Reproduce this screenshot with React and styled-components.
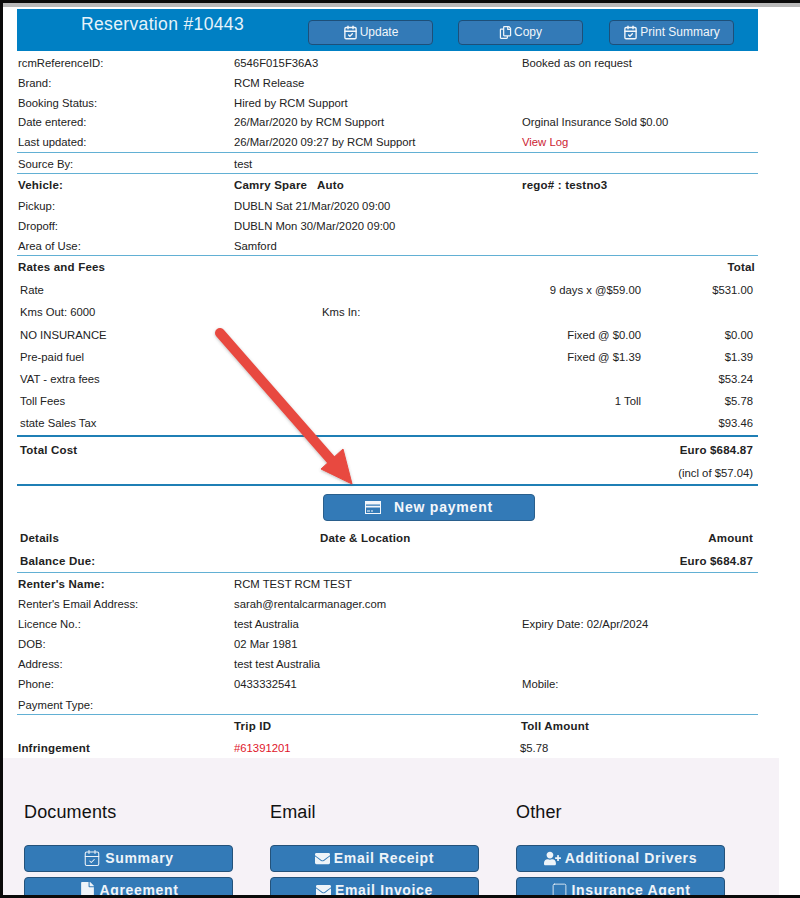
import React from 'react';
import styled, { createGlobalStyle } from 'styled-components';
import { FaRegCopy, FaEnvelope, FaFile, FaUserPlus } from 'react-icons/fa';
import { CalendarCheck, Square } from 'lucide-react';

const GlobalStyle = createGlobalStyle`
  html, body { margin: 0; padding: 0; background: #fff; }
  * { box-sizing: border-box; }
`;

const Frame = styled.div`
  position: relative;
  width: 800px;
  height: 898px;
  overflow: hidden;
  background: #fff;
  border-top: 3px solid #0a0a0a;
  border-left: 3px solid #0a0a0a;
  border-bottom: 3px solid #0a0a0a;
  font-family: 'Liberation Sans', Arial, sans-serif;
  font-size: 11.3px;
  color: #222;
`;

const TopStrip = styled.div`
  height: 4px;
  margin-bottom: 2px;
  background: #b9b9b9;
`;

// everything down to the grey panel
const Sheet = styled.div`
  width: 741px;
  margin-left: 14px;
`;

const Header = styled.div`
  display: grid;
  grid-template-columns: 291px 150px 151px 125px;
  height: 42px;
  background: #0080c4;
  padding-top: 11px;
`;

const Title = styled.h1`
  margin: -6px 0 0;
  text-align: center;
  font-size: 17.5px;
  line-height: 20px;
  font-weight: 400;
  letter-spacing: 0.35px;
  color: #e6f3fa;
`;

const HeaderButton = styled.button`
  width: 125px;
  height: 25px;
  display: flex;
  align-items: center;
  justify-content: center;
  gap: 2px;
  padding: 0 0 1px;
  background: #337ab7;
  border: 1px solid #1d4f79;
  border-radius: 4px;
  color: #f1f6fa;
  font: 12px 'Liberation Sans', Arial, sans-serif;
`;

const Section = styled.div`
  padding-top: ${(p) => p.$pad || 0}px;
  border-bottom: ${(p) => (p.$line === 'strong' ? '2px solid #1f7fb5' : '1px solid #62b0d4')};
`;

const InfoRow = styled.div`
  display: grid;
  grid-template-columns: 216px 288px 1fr;
  height: ${(p) => p.$h || 20.2}px;
  line-height: ${(p) => (p.$h || 20.2) + (p.$shift || 0) * 2}px;
  padding-left: 1px;
`;

const FeeRow = styled.div`
  display: grid;
  grid-template-columns: 302px 140px 179px 112px;
  height: ${(p) => p.$h || 22.2}px;
  line-height: ${(p) => (p.$h || 22.2) + (p.$shift ?? 0.5) * 2}px;
  padding-left: 3px;
`;

const Bold = styled.span`
  font-size: 11.5px;
  font-weight: 700;
  letter-spacing: 0.2px;
`;

const BoldRight = styled(Bold)`
  text-align: right;
`;

const Right = styled.span`
  text-align: right;
`;

const RedText = styled.span`
  color: ${(p) => (p.$bright ? '#e0152a' : '#cc2433')};
`;

const MidHead = styled(Bold)`
  margin-left: -2px;
`;

const TollHead = styled(Bold)`
  margin-left: -1px;
`;

const TollValue = styled.span`
  margin-left: -2px;
`;

const FeeHead = styled.div`
  display: flex;
  justify-content: space-between;
  height: 23px;
  line-height: 22px;
  padding: 0 3px 0 1px;
`;

const PayRow = styled.div`
  display: flex;
  height: 42px;
  padding: 8px 0 0 306px;
`;

const PayButton = styled.button`
  width: 212px;
  height: 27px;
  display: flex;
  align-items: center;
  justify-content: center;
  gap: 13px;
  padding: 0;
  background: #337ab7;
  border: 1px solid #2a5f8c;
  border-radius: 4px;
  color: #f3f7fb;
  font: 700 14px 'Liberation Sans', Arial, sans-serif;
  letter-spacing: 0.8px;
`;

const Panel = styled.div`
  width: 776px;
  height: 140px;
  background: #f6f2f7;
  display: grid;
  grid-template-columns: repeat(3, 246px);
  padding: 44px 0 0 21px;
`;

const Column = styled.div`
  display: flex;
  flex-direction: column;
  gap: 5px;
`;

const ColumnTitle = styled.h3`
  margin: 0 0 17px;
  font-size: 18px;
  line-height: 21px;
  font-weight: 400;
  letter-spacing: 0.15px;
  color: #111;
`;

const PanelButton = styled.button`
  flex: none;
  width: 209px;
  height: 27px;
  display: flex;
  align-items: center;
  justify-content: center;
  gap: 4px;
  padding: 0;
  background: #337ab7;
  border: 1px solid #24527a;
  border-radius: 4px;
  color: #eef4f9;
  font: 700 14px 'Liberation Sans', Arial, sans-serif;
  letter-spacing: 0.65px;
`;

const ArrowLayer = styled.svg`
  position: absolute;
  left: 197px;
  top: 310px;
  width: 180px;
  height: 190px;
  pointer-events: none;
`;

// red annotation drawn over the page
const Arrow = () => (
  <ArrowLayer viewBox="0 0 180 190">
    <defs>
      <filter id="soft" x="-20%" y="-20%" width="140%" height="140%">
        <feDropShadow dx="0" dy="1" stdDeviation="1.5" floodColor="#555" floodOpacity="0.4" />
      </filter>
    </defs>
    <g filter="url(#soft)" fill="#e8483f">
      <path d="M20 20 L132 148" stroke="#e8483f" strokeWidth="10" strokeLinecap="round" />
      <path d="M152 171 L143 136 L121 156 Z" stroke="#e8483f" strokeWidth="1" />
    </g>
  </ArrowLayer>
);

const CardIcon = () => (
  <svg width="16" height="13" viewBox="0 0 16 13">
    <path fill="#f3f7fb" fillRule="evenodd" d="M0 0h16v13H0z M1 6.5V12h14V6.5z M1 3.5v1.2h14V3.5z" />
    <path fill="#f3f7fb" d="M2 9.5h3v1H2zM6 9.5h2v1H6z" />
  </svg>
);

const bookingRows = [
  ['rcmReferenceID:', '6546F015F36A3', 'Booked as on request'],
  ['Brand:', 'RCM Release', ''],
  ['Booking Status:', 'Hired by RCM Support', ''],
  ['Date entered:', '26/Mar/2020 by RCM Support', 'Orginal Insurance Sold $0.00'],
  ['Last updated:', '26/Mar/2020 09:27 by RCM Support', <RedText>View Log</RedText>],
];

const vehicleRows = [
  ['Pickup:', 'DUBLN Sat 21/Mar/2020 09:00'],
  ['Dropoff:', 'DUBLN Mon 30/Mar/2020 09:00'],
  ['Area of Use:', 'Samford'],
];

const feeRows = [
  ['Rate', '', '9 days x @$59.00', '$531.00'],
  ['Kms Out: 6000', 'Kms In:', '', ''],
  ['NO INSURANCE', '', 'Fixed @ $0.00', '$0.00'],
  ['Pre-paid fuel', '', 'Fixed @ $1.39', '$1.39'],
  ['VAT - extra fees', '', '', '$53.24'],
  ['Toll Fees', '', '1 Toll', '$5.78'],
  ['state Sales Tax', '', '', '$93.46'],
];

const renterRows = [
  ['Renter\'s Email Address:', 'sarah@rentalcarmanager.com', ''],
  ['Licence No.:', 'test Australia', 'Expiry Date: 02/Apr/2024'],
  ['DOB:', '02 Mar 1981', ''],
  ['Address:', 'test test Australia', ''],
  ['Phone:', '0433332541', 'Mobile:'],
  ['Payment Type:', '', ''],
];

const panelColumns = [
  {
    title: 'Documents',
    buttons: [
      [<CalendarCheck key="i" size={18} strokeWidth={1.4} />, 'Summary'],
      [<FaFile key="i" size={17} />, 'Agreement'],
    ],
  },
  {
    title: 'Email',
    buttons: [
      [<FaEnvelope key="i" size={15} />, 'Email Receipt'],
      [<FaEnvelope key="i" size={15} />, 'Email Invoice'],
    ],
  },
  {
    title: 'Other',
    buttons: [
      [<FaUserPlus key="i" size={17} />, 'Additional Drivers'],
      [<Square key="i" size={17} strokeWidth={1.2} />, 'Insurance Agent'],
    ],
  },
];

export default function App() {
  return (
    <Frame>
      <GlobalStyle />
      <TopStrip />
      <Sheet>
        <Header>
          <Title>Reservation #10443</Title>
          <HeaderButton><CalendarCheck size={15} strokeWidth={2.2} />Update</HeaderButton>
          <HeaderButton><FaRegCopy size={13} />Copy</HeaderButton>
          <HeaderButton><CalendarCheck size={15} strokeWidth={2.2} />Print Summary</HeaderButton>
        </Header>

        <Section $pad={2}>
          {bookingRows.map((r) => (
            <InfoRow key={r[0]} $h={19.8} $shift={0.5}><span>{r[0]}</span><span>{r[1]}</span><span>{r[2]}</span></InfoRow>
          ))}
        </Section>
        <Section $pad={1}>
          <InfoRow $h={19} $shift={1}><span>Source By:</span><span>test</span><span /></InfoRow>
        </Section>
        <Section $pad={2.5}>
          <InfoRow $h={19.7}><Bold>Vehicle:</Bold><Bold>Camry Spare &nbsp; Auto</Bold><Bold>rego# : testno3</Bold></InfoRow>
          {vehicleRows.map((r) => (
            <InfoRow key={r[0]} $h={19.7} $shift={0.5}><span>{r[0]}</span><span>{r[1]}</span><span /></InfoRow>
          ))}
        </Section>

        <Section $line="strong">
          <FeeHead><Bold>Rates and Fees</Bold><Bold>Total</Bold></FeeHead>
          {feeRows.map((r) => (
            <FeeRow key={r[0]}><span>{r[0]}</span><span>{r[1]}</span><Right>{r[2]}</Right><Right>{r[3]}</Right></FeeRow>
          ))}
        </Section>
        <Section $line="strong">
          <FeeRow $h={26}><Bold>Total Cost</Bold><span /><span /><BoldRight>Euro $684.87</BoldRight></FeeRow>
          <FeeRow $h={21} $shift={-0.5}><span /><span /><span /><Right>(incl of $57.04)</Right></FeeRow>
        </Section>

        <PayRow>
          <PayButton><CardIcon />New payment</PayButton>
        </PayRow>

        <Section>
          <FeeRow $h={22} $shift={-1}><Bold>Details</Bold><MidHead>Date &amp; Location</MidHead><span /><BoldRight>Amount</BoldRight></FeeRow>
          <FeeRow $h={22} $shift={0.5}><Bold>Balance Due:</Bold><span /><span /><BoldRight>Euro $684.87</BoldRight></FeeRow>
        </Section>

        <Section>
          <InfoRow $shift={1.5}><Bold>Renter's Name:</Bold><span>RCM TEST RCM TEST</span><span /></InfoRow>
          {renterRows.map((r) => (
            <InfoRow key={r[0]} $shift={1.5}><span>{r[0]}</span><span>{r[1]}</span><span>{r[2]}</span></InfoRow>
          ))}
        </Section>

        <InfoRow $h={22}><span /><Bold>Trip ID</Bold><TollHead>Toll Amount</TollHead></InfoRow>
        <InfoRow $h={21} $shift={1}>
          <Bold>Infringement</Bold>
          <RedText $bright>#61391201</RedText>
          <TollValue>$5.78</TollValue>
        </InfoRow>
      </Sheet>

      <Panel>
        {panelColumns.map((col) => (
          <Column key={col.title}>
            <ColumnTitle>{col.title}</ColumnTitle>
            {col.buttons.map(([icon, label]) => (
              <PanelButton key={label}>{icon}{label}</PanelButton>
            ))}
          </Column>
        ))}
      </Panel>

      <Arrow />
    </Frame>
  );
}
